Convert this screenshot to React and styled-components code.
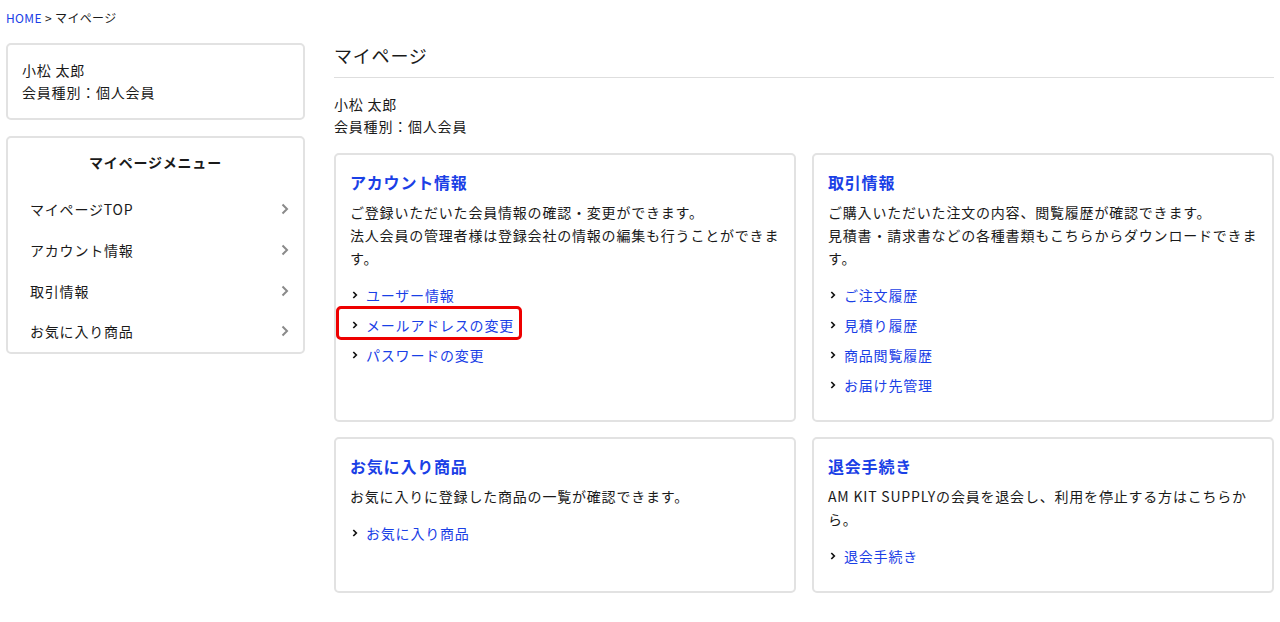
import React from "react";
import styled, { createGlobalStyle } from "styled-components";

const Global = createGlobalStyle`
  html, body { margin: 0; padding: 0; background: #fff; }
  body {
    font-family: "Noto Sans CJK JP", "Noto Sans", sans-serif;
    color: #1a1a1a;
    letter-spacing: 0.05em;
    -webkit-font-smoothing: antialiased;
  }
  *, *::before, *::after { box-sizing: border-box; }
`;

const BLUE = "#1a40e6";
const BORDER = "#e2e2e2";

const Page = styled.div`
  padding: 6px 6px 20px;
`;

const Breadcrumb = styled.nav`
  font-size: 12px;
  line-height: 24px;
  letter-spacing: 0.03em;
  margin-bottom: 13px;
  a { color: ${BLUE}; text-decoration: none; }
`;

const Layout = styled.div`
  display: flex;
  gap: 29px;
  align-items: flex-start;
`;

const Sidebar = styled.aside`
  width: 299px;
  flex: none;
  display: flex;
  flex-direction: column;
  gap: 16px;
`;

const Box = styled.div`
  border: 2px solid ${BORDER};
  border-radius: 5px;
  background: #fff;
`;

const ProfileBox = styled(Box)`
  padding: 14px 14px 15px;
`;

const InfoLine = styled.div`
  font-size: 14px;
  line-height: 22px;
`;

const MenuBox = styled(Box)`
  padding: 13px 0 0;
`;

const MenuTitle = styled.div`
  text-align: center;
  font-size: 14px;
  font-weight: 700;
  line-height: 22px;
  margin-bottom: 16px;
`;

const MenuList = styled.ul`
  list-style: none;
  margin: 0;
  padding: 0;
`;

const MenuItem = styled.li`
  display: flex;
  align-items: center;
  justify-content: space-between;
  height: 40.7px;
  padding: 0 14px 0 22px;
  font-size: 14px;
  color: #1a1a1a;
`;

const Main = styled.main`
  flex: 1;
  min-width: 0;
`;

const PageTitle = styled.h1`
  margin: 0;
  font-size: 18px;
  font-weight: 400;
  line-height: 24px;
  padding-bottom: 10px;
  border-bottom: 1px solid #dedede;
  margin-bottom: 15px;
`;

const Member = styled.div`
  margin-bottom: 16px;
`;

const Grid = styled.div`
  display: grid;
  grid-template-columns: 1fr 1fr;
  column-gap: 16px;
  row-gap: 15px;
`;

const Card = styled(Box)`
  padding: 16px 14px 20px;
`;

const CardTitle = styled.h2`
  margin: 0 0 8px;
  font-size: 16px;
  font-weight: 700;
  line-height: 22px;
  color: ${BLUE};
`;

const Desc = styled.p`
  margin: 0 0 10px;
  font-size: 14px;
  line-height: 23px;
`;

const Links = styled.ul`
  list-style: none;
  margin: 0;
  padding: 0;
`;

const LinkItem = styled.li`
  position: relative;
  display: flex;
  align-items: center;
  height: 30px;
  font-size: 14px;
  a { color: ${BLUE}; text-decoration: none; }
  ${(p) =>
    p.$highlight &&
    `
    &::after {
      content: "";
      position: absolute;
      left: -14px;
      top: -4px;
      width: 186px;
      height: 34px;
      border: 3px solid #ee0000;
      border-radius: 5px;
      pointer-events: none;
    }
  `}
`;

const Arrow = styled.svg`
  width: 6px;
  height: 8px;
  margin: 0 8px 0 2px;
  flex: none;
`;

const SideChevron = styled.svg`
  width: 8px;
  height: 12px;
  flex: none;
`;

const LinkArrow = () => (
  <Arrow viewBox="0 0 6 8">
    <path d="M1.3 1 L4.3 4 L1.3 7" fill="none" stroke="#111" strokeWidth="1.7" />
  </Arrow>
);

const Chevron = () => (
  <SideChevron viewBox="0 0 8 12">
    <path d="M1.5 1.5 L6 6 L1.5 10.5" fill="none" stroke="#8a8a8a" strokeWidth="2" />
  </SideChevron>
);

const cards = [
  {
    title: "アカウント情報",
    desc: ["ご登録いただいた会員情報の確認・変更ができます。", "法人会員の管理者様は登録会社の情報の編集も行うことができます。"],
    links: ["ユーザー情報", "メールアドレスの変更", "パスワードの変更"],
    highlight: 1,
  },
  {
    title: "取引情報",
    desc: ["ご購入いただいた注文の内容、閲覧履歴が確認できます。", "見積書・請求書などの各種書類もこちらからダウンロードできます。"],
    links: ["ご注文履歴", "見積り履歴", "商品閲覧履歴", "お届け先管理"],
  },
  {
    title: "お気に入り商品",
    desc: ["お気に入りに登録した商品の一覧が確認できます。"],
    links: ["お気に入り商品"],
  },
  {
    title: "退会手続き",
    desc: ["AM KIT SUPPLYの会員を退会し、利用を停止する方はこちらから。"],
    links: ["退会手続き"],
  },
];

const menu = ["マイページTOP", "アカウント情報", "取引情報", "お気に入り商品"];

export default function App() {
  return (
    <Page>
      <Global />
      <Breadcrumb>
        <a href="#">HOME</a> &gt; マイページ
      </Breadcrumb>
      <Layout>
        <Sidebar>
          <ProfileBox>
            <InfoLine>小松 太郎</InfoLine>
            <InfoLine>会員種別：個人会員</InfoLine>
          </ProfileBox>
          <MenuBox>
            <MenuTitle>マイページメニュー</MenuTitle>
            <MenuList>
              {menu.map((m) => (
                <MenuItem key={m}>
                  <span>{m}</span>
                  <Chevron />
                </MenuItem>
              ))}
            </MenuList>
          </MenuBox>
        </Sidebar>
        <Main>
          <PageTitle>マイページ</PageTitle>
          <Member>
            <InfoLine>小松 太郎</InfoLine>
            <InfoLine>会員種別：個人会員</InfoLine>
          </Member>
          <Grid>
            {cards.map((c) => (
              <Card key={c.title}>
                <CardTitle>{c.title}</CardTitle>
                <Desc>
                  {c.desc.map((d, i) => (
                    <React.Fragment key={i}>
                      {i > 0 && <br />}
                      {d}
                    </React.Fragment>
                  ))}
                </Desc>
                <Links>
                  {c.links.map((l, i) => (
                    <LinkItem key={l} $highlight={c.highlight === i}>
                      <LinkArrow />
                      <a href="#">{l}</a>
                    </LinkItem>
                  ))}
                </Links>
              </Card>
            ))}
          </Grid>
        </Main>
      </Layout>
    </Page>
  );
}
